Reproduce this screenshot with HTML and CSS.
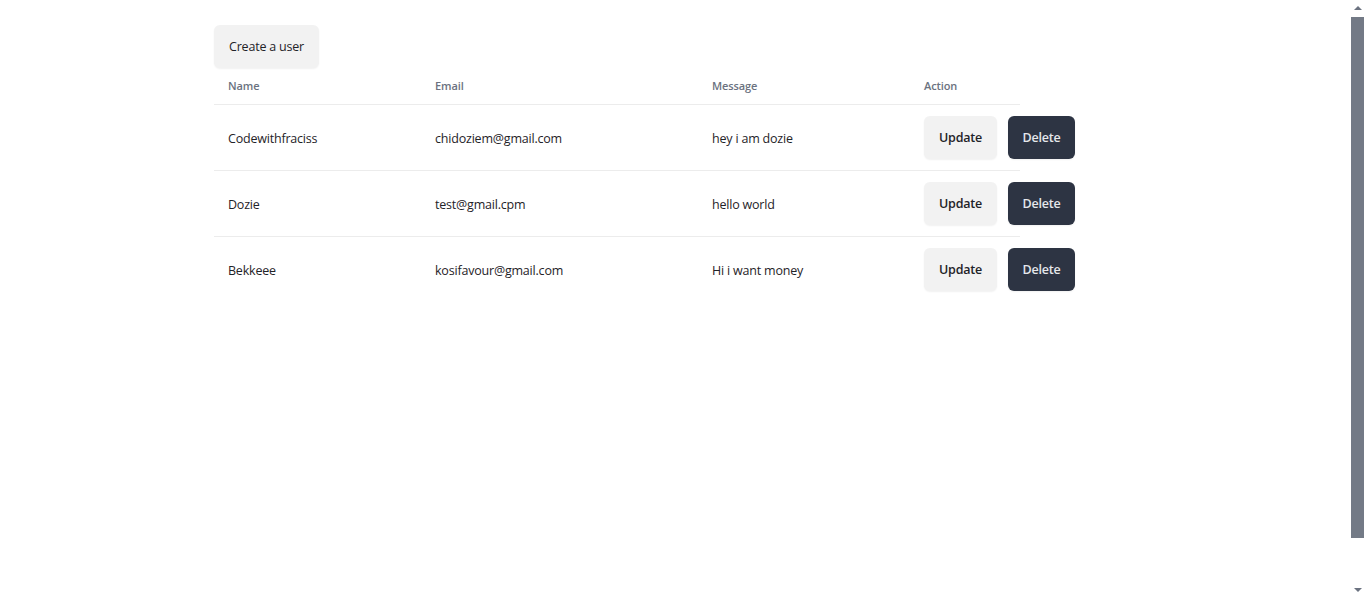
FILE: index.html
```html
<!DOCTYPE html>
<html lang="en">
<head>
<meta charset="utf-8">
<title>Users</title>
<link rel="stylesheet" href="styles.css">
</head>
<body>
<div class="screen">
  <main class="page">
    <button class="btn btn-light create">Create a user</button>
    <div class="table">
      <div class="row head">
        <div class="cell c-name">Name</div>
        <div class="cell c-email">Email</div>
        <div class="cell c-msg">Message</div>
        <div class="cell c-act">Action</div>
      </div>
      <div class="row">
        <div class="cell c-name">Codewithfraciss</div>
        <div class="cell c-email">chidoziem@gmail.com</div>
        <div class="cell c-msg">hey i am dozie</div>
        <div class="cell c-act actions"><button class="btn btn-light">Update</button><button class="btn btn-dark">Delete</button></div>
      </div>
      <div class="row">
        <div class="cell c-name">Dozie</div>
        <div class="cell c-email">test@gmail.cpm</div>
        <div class="cell c-msg">hello world</div>
        <div class="cell c-act actions"><button class="btn btn-light">Update</button><button class="btn btn-dark">Delete</button></div>
      </div>
      <div class="row last">
        <div class="cell c-name">Bekkeee</div>
        <div class="cell c-email">kosifavour@gmail.com</div>
        <div class="cell c-msg">Hi i want money</div>
        <div class="cell c-act actions"><button class="btn btn-light">Update</button><button class="btn btn-dark">Delete</button></div>
      </div>
    </div>
  </main>
  <div class="scrollbar" aria-hidden="true">
    <span class="arrow up"></span>
    <span class="thumb"></span>
    <span class="arrow down"></span>
  </div>
</div>
</body>
</html>
```

FILE: styles.css
```css
html, body {
  margin: 0;
  height: 100%;
  overflow: hidden;
}
body {
  background: #ffffff;
  font-family: "Open Sans", "Noto Sans", "Liberation Sans", sans-serif;
  color: #1f2328;
}
.screen {
  display: flex;
  height: 599px;
}
.page {
  flex: 1;
  padding: 25px 0 0 214px;
}
.btn {
  font-family: inherit;
  border: none;
  border-radius: 6px;
  cursor: pointer;
  height: 43px;
  padding: 0;
  font-size: 12.5px;
  letter-spacing: -0.2px;
  box-shadow: 0 1px 2px rgba(0, 0, 0, 0.06);
  flex-shrink: 0;
}
.btn-light {
  background: #f2f2f2;
  color: #1f2328;
}
.btn-dark {
  background: #2d3443;
  color: #e5e7eb;
  font-weight: 600;
}
.create {
  width: 105px;
  display: block;
}
.table {
  width: 806px;
}
.row {
  display: flex;
  align-items: center;
  height: 65px;
  border-bottom: 1px solid #ececec;
  font-size: 12.5px;
  letter-spacing: -0.2px;
  color: #1f2328;
}
.row .cell.c-name,
.row .cell.c-email,
.row .cell.c-msg {
  padding-top: 2px;
}
.row.last {
  border-bottom: none;
}
.row.head {
  height: 36px;
  font-size: 11px;
  font-weight: 600;
  letter-spacing: -0.1px;
  color: #6b7280;
}
.row.head .cell {
  padding-top: 0;
  padding-bottom: 2px;
}
.cell {
  padding-left: 14px;
  box-sizing: border-box;
  white-space: nowrap;
  flex-shrink: 0;
}
.c-name { width: 207px; }
.c-email { width: 277px; }
.c-msg { width: 212px; }
.c-act { width: 110px; }
.actions {
  display: flex;
  gap: 11px;
}
.actions .btn-light {
  width: 73px;
  font-weight: 600;
}
.actions .btn-dark {
  width: 67px;
}
.scrollbar {
  width: 15px;
  flex-shrink: 0;
  display: flex;
  flex-direction: column;
  align-items: flex-start;
  background: #ffffff;
}
.arrow {
  width: 0;
  height: 0;
  border-left: 4px solid transparent;
  border-right: 4px solid transparent;
  margin-left: 3px;
}
.arrow.up {
  margin-top: 6px;
  border-bottom: 4px solid #6b7280;
}
.thumb {
  margin-top: 7px;
  width: 13px;
  height: 521px;
  background: #737a86;
}
.arrow.down {
  margin-top: 50px;
  border-top: 4px solid #6b7280;
}
```
